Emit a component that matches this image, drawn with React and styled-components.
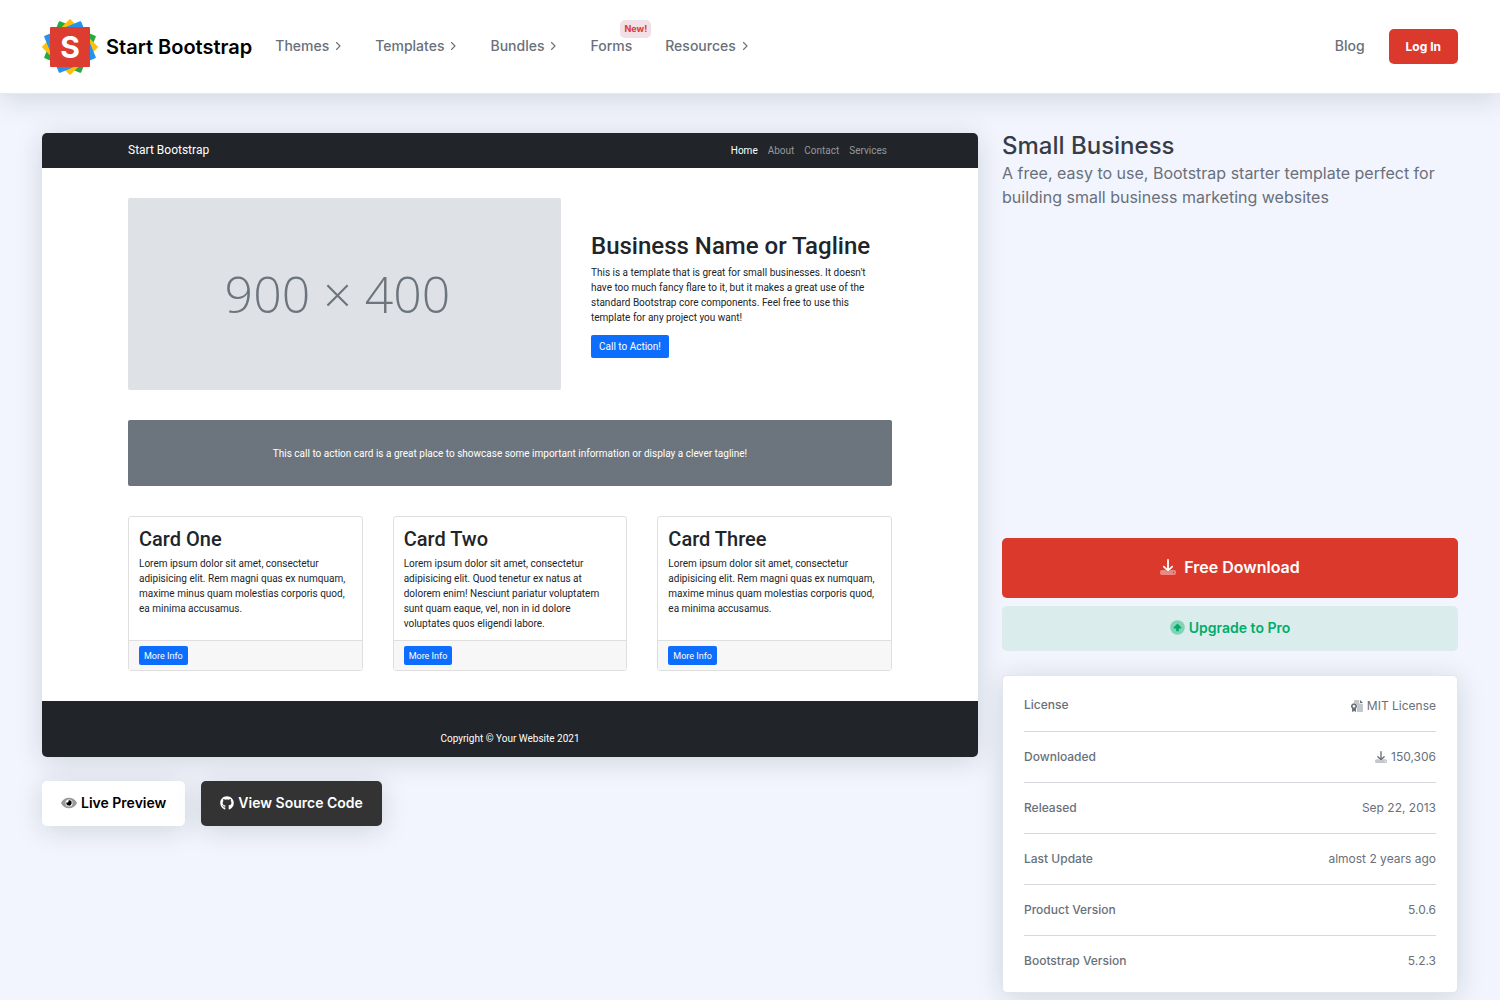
import React from "react";
import styled, { createGlobalStyle, css } from "styled-components";
import { FaGithub } from "react-icons/fa";

const GlobalStyle = createGlobalStyle`
  *, *::before, *::after { box-sizing: border-box; }
  body {
    margin: 0;
    background: #f2f5fe;
    color: #69707a;
    font-family: Inter, "Liberation Sans", sans-serif;
    font-size: 16px;
    line-height: 24px;
  }
  h1, h2, h3, p { margin: 0; }
  a { color: inherit; text-decoration: none; }
  button { border: 0; font-family: inherit; cursor: pointer; }
`;

const shadow = "0 4px 28px rgba(10, 25, 10, 0.15)";

/* ---------- Site header ---------- */

const Header = styled.header`
  position: relative;
  display: flex;
  align-items: center;
  height: 94px;
  padding: 0 42px;
  background: #fff;
  border-bottom: 1px solid #e6eaef;
  box-shadow: ${shadow};
`;

const Brand = styled.a`
  display: flex;
  align-items: center;
  gap: 8px;
  margin-right: 23px;
  color: #000;
  font-size: 20px;
  font-weight: 600;
  white-space: nowrap;
`;

const Nav = styled.nav`
  display: flex;
  flex: 1;
  align-items: center;
  gap: 33px;
`;

const NavLink = styled.a`
  position: relative;
  display: flex;
  align-items: center;
  gap: 6px;
  padding-bottom: 2px;
  font-size: 14px;
  font-weight: 500;
`;

const NewBadge = styled.span`
  position: absolute;
  left: 30px;
  bottom: 22px;
  padding: 0 4px;
  border-radius: 5px;
  background: #f1e0e6;
  color: #dd3a2d;
  font-size: 9px;
  font-weight: 700;
  line-height: 18px;
`;

const Account = styled.div`
  display: flex;
  align-items: center;
  gap: 24px;
`;

const LoginButton = styled.button`
  height: 35px;
  padding: 0 17px;
  border-radius: 5px;
  background: #dc392d;
  color: #fff;
  font-size: 12px;
  font-weight: 700;
`;

/* ---------- Page layout ---------- */

const Page = styled.main`
  display: flex;
  align-items: flex-start;
  padding: 39px 30px 8px;
`;

const PreviewColumn = styled.section`
  flex: 0 0 auto;
  width: calc(100% * 2 / 3);
  padding: 0 12px;
`;

const InfoColumn = styled.section`
  flex: 1;
  min-width: 0;
  padding: 0 12px;
`;

const Title = styled.h1`
  margin-bottom: 2px;
  color: #363d47;
  font-size: 24px;
  font-weight: 500;
  line-height: 26px;
`;

const Intro = styled.header`
  min-height: 405px;
`;

const actionSizes = {
  large: css`height: 60px; font-size: 16px; gap: 8px;`,
  normal: css`height: 45px; font-size: 14px; gap: 4px;`,
};

const actionTones = {
  red: css`background: #dc392d; color: #fff;`,
  green: css`background: #daedec; color: #00ac69;`,
  white: css`background: #fff; color: #000; box-shadow: ${shadow};`,
  dark: css`background: #333; color: #fff; box-shadow: ${shadow};`,
};

const Action = styled.button`
  display: flex;
  align-items: center;
  justify-content: center;
  padding: 0 19px 2px;
  border-radius: 5px;
  font-weight: 600;
  ${(p) => actionSizes[p.$size || "normal"]}
  ${(p) => actionTones[p.$tone]}
`;

const ActionRow = styled.div`
  display: flex;
  gap: 16px;
  margin-top: 24px;
`;

const ActionStack = styled.div`
  display: flex;
  flex-direction: column;
  gap: 8px;
`;

const DetailsCard = styled.div`
  margin-top: 24px;
  padding: 4px 21px 6px;
  border: 1px solid #e3e6ec;
  border-radius: 5px;
  background: #fff;
  box-shadow: ${shadow};
`;

const DetailsTable = styled.table`
  width: 100%;
  border-collapse: collapse;
  font-size: 12px;

  th, td { height: 51px; padding: 0; }
  th { text-align: left; font-weight: 500; }
  td { text-align: right; }
  tr + tr { border-top: 1px solid #d5d9de; }
`;

const DetailValue = styled.span`
  display: inline-flex;
  align-items: center;
  gap: 4px;
  vertical-align: middle;
`;

/* ---------- Template preview ---------- */

const Preview = styled.article`
  overflow: hidden;
  border-radius: 5px;
  background: #fff;
  box-shadow: ${shadow};
  color: #212529;
  font-family: Roboto, "Liberation Sans", sans-serif;
  font-size: 10px;
  line-height: 15px;
`;

const PreviewNav = styled.div`
  display: flex;
  align-items: center;
  justify-content: space-between;
  height: 35px;
  padding: 0 86px;
  background: #212529;
  color: #fff;
  font-size: 12px;
`;

const PreviewLinks = styled.nav`
  display: flex;
  gap: 10px;
  padding-right: 5px;
  font-size: 10px;
`;

const PreviewLink = styled.a`
  color: ${(p) => (p.$active ? "#fff" : "#95989b")};
`;

const PreviewBody = styled.div`
  display: flex;
  flex-direction: column;
  gap: 30px;
  padding: 30px 86px;
`;

const Hero = styled.div`
  display: grid;
  grid-template-columns: 433fr 301fr;
  gap: 30px;
  align-items: center;
`;

const Placeholder = styled.div`
  display: flex;
  align-items: center;
  justify-content: center;
  height: 192px;
  padding-right: 14px;
  border-radius: 2px;
  background: #dee2e6;
  color: #6c757d;
  font-family: "Open Sans", "Noto Sans", sans-serif;
  font-size: 50px;
  font-weight: 300;
`;

const HeroText = styled.div`
  display: flex;
  flex-direction: column;
  align-items: flex-start;
`;

const HeroTitle = styled.h2`
  margin-bottom: 3px;
  font-size: 24px;
  font-weight: 500;
  line-height: 32px;
  white-space: nowrap;
`;

const HeroCopy = styled.p`
  max-width: 284px;
  margin-bottom: 10px;
`;

const BlueButton = styled.button`
  display: block;
  height: ${(p) => (p.$small ? "19px" : "23px")};
  padding: 0 ${(p) => (p.$small ? "5px" : "8px")};
  border-radius: 2px;
  background: #0d6efd;
  color: #fff;
  font-size: ${(p) => (p.$small ? "9px" : "10px")};
`;

const Banner = styled.p`
  padding: 26px 0 25px;
  border-radius: 2px;
  background: #6c757d;
  color: #fff;
  text-align: center;
`;

const Cards = styled.div`
  display: grid;
  grid-template-columns: repeat(3, 1fr);
  gap: 30px;
`;

const Card = styled.section`
  display: flex;
  flex-direction: column;
  border: 1px solid #dfdfdf;
  border-radius: 3px;
`;

const CardBody = styled.div`
  flex: 1;
  padding: 10px 10px 9px;
`;

const CardTitle = styled.h3`
  margin-bottom: 5px;
  font-size: 20px;
  font-weight: 500;
  line-height: 24px;
`;

const CardFooter = styled.div`
  padding: 5px 10px;
  border-top: 1px solid #dfdfdf;
  background: #f7f7f7;
`;

const PreviewFooter = styled.footer`
  padding: 30px 0 11px;
  background: #212529;
  color: #fff;
  text-align: center;
`;

/* ---------- Drawings ---------- */

const Logo = () => (
  <svg width="56" height="56" viewBox="-28 -28 56 56" aria-hidden="true">
    <rect x="-20" y="-20" width="40" height="40" rx="1" fill="#28a745" transform="rotate(22.5)" />
    <rect x="-20" y="-20" width="40" height="40" rx="1" fill="#ffc107" transform="rotate(45)" />
    <rect x="-20" y="-20" width="40" height="40" rx="1" fill="#2492f0" transform="rotate(-22.5)" />
    <rect x="-20" y="-20" width="40" height="40" rx="1" fill="#dd3d31" />
    <text x="0" y="11" textAnchor="middle" fill="#fff" fontFamily="Inter, sans-serif" fontWeight="700" fontSize="30">S</text>
  </svg>
);

const Chevron = () => (
  <svg width="7" height="10" viewBox="0 0 7 10" fill="none" stroke="currentColor" strokeWidth="1.1" aria-hidden="true">
    <path d="M1.5 1.5 5 5 1.5 8.5" strokeLinecap="round" strokeLinejoin="round" />
  </svg>
);

const EyeIcon = () => (
  <svg width="16" height="14" viewBox="0 0 576 512" fill="currentColor" aria-hidden="true">
    <path opacity=".4" fillRule="evenodd" d="M572.5 241.4C518.3 135.600 410.900 64 288 64S57.700 135.600 3.500 241.400a32.400 32.400 0 0 0 0 29.200C57.700 376.400 165.100 448 288 448s230.300-71.600 284.500-177.400a32.400 32.400 0 0 0 0-29.200ZM288 384a128 128 0 1 1 0-256 128 128 0 0 1 0 256Z" />
    <path d="M288 160a96 96 0 0 0-25 4 48 48 0 0 1-67 67 96 96 0 1 0 92-71Z" />
  </svg>
);

const DownloadIcon = ({ size }) => (
  <svg width={size} height={size} viewBox="0 0 16 16" fill="none" aria-hidden="true">
    <path opacity=".4" fill="currentColor" fillRule="evenodd" d="M2 11h3.300l1.300 1.300a2 2 0 0 0 2.800 0L10.700 11H14a2 2 0 0 1 2 2v1a2 2 0 0 1-2 2H2a2 2 0 0 1-2-2v-1a2 2 0 0 1 2-2Zm11.500 1.800a.7.7 0 1 0 0 1.400.7.7 0 0 0 0-1.400Z" />
    <path d="M8 1v10.500M3.800 7.600 8 11.700l4.200-4.100" stroke="currentColor" strokeWidth="1.800" strokeLinecap="round" strokeLinejoin="round" />
  </svg>
);

const UpgradeIcon = () => (
  <svg width="15" height="15" viewBox="0 0 16 16" fill="currentColor" aria-hidden="true">
    <circle opacity=".4" cx="8" cy="8" r="7.800" />
    <path d="M8 3.700 12 7.800a.7.7 0 0 1-.5 1.200H9.400v2.400a.7.7 0 0 1-.7.7H7.300a.7.7 0 0 1-.7-.7V9H4.500A.7.7 0 0 1 4 7.800Z" />
  </svg>
);

const LicenseIcon = () => (
  <svg width="12" height="12" viewBox="0 0 16 16" fill="currentColor" aria-hidden="true">
    <path opacity=".4" d="M5 0h6v4a1 1 0 0 0 1 1h4v10a1 1 0 0 1-1 1H8v-5.200A4.600 4.600 0 0 0 4 4V1a1 1 0 0 1 1-1Z" />
    <path d="M12 0v4h4Z" />
    <path fillRule="evenodd" d="M4 4.200a4 4 0 0 1 2.600 7V16L4 14.700 1.400 16v-4.800A4 4 0 0 1 4 4.200Zm0 2.300a1.800 1.800 0 1 0 0 3.600 1.800 1.800 0 0 0 0-3.600Z" />
  </svg>
);

/* ---------- Content ---------- */

const navItems = [
  { label: "Themes", menu: true },
  { label: "Templates", menu: true },
  { label: "Bundles", menu: true },
  { label: "Forms", badge: "New!" },
  { label: "Resources", menu: true },
];

const shortCopy =
  "Lorem ipsum dolor sit amet, consectetur adipisicing elit. Rem magni quas ex numquam, maxime minus quam molestias corporis quod, ea minima accusamus.";

const cards = [
  { title: "Card One", copy: shortCopy },
  {
    title: "Card Two",
    copy: "Lorem ipsum dolor sit amet, consectetur adipisicing elit. Quod tenetur ex natus at dolorem enim! Nesciunt pariatur voluptatem sunt quam eaque, vel, non in id dolore voluptates quos eligendi labore.",
  },
  { title: "Card Three", copy: shortCopy },
];

const details = [
  { label: "License", value: "MIT License", icon: <LicenseIcon /> },
  { label: "Downloaded", value: "150,306", icon: <DownloadIcon size={12} /> },
  { label: "Released", value: "Sep 22, 2013" },
  { label: "Last Update", value: "almost 2 years ago" },
  { label: "Product Version", value: "5.0.6" },
  { label: "Bootstrap Version", value: "5.2.3" },
];

const TemplatePreview = () => (
  <Preview>
    <PreviewNav>
      <a href="#preview">Start Bootstrap</a>
      <PreviewLinks>
        <PreviewLink href="#home" $active>Home</PreviewLink>
        <PreviewLink href="#about">About</PreviewLink>
        <PreviewLink href="#contact">Contact</PreviewLink>
        <PreviewLink href="#services">Services</PreviewLink>
      </PreviewLinks>
    </PreviewNav>
    <PreviewBody>
      <Hero>
        <Placeholder>900 × 400</Placeholder>
        <HeroText>
          <HeroTitle>Business Name or Tagline</HeroTitle>
          <HeroCopy>
            This is a template that is great for small businesses. It doesn't have too much fancy
            flare to it, but it makes a great use of the standard Bootstrap core components. Feel
            free to use this template for any project you want!
          </HeroCopy>
          <BlueButton>Call to Action!</BlueButton>
        </HeroText>
      </Hero>
      <Banner>
        This call to action card is a great place to showcase some important information or display
        a clever tagline!
      </Banner>
      <Cards>
        {cards.map((card) => (
          <Card key={card.title}>
            <CardBody>
              <CardTitle>{card.title}</CardTitle>
              <p>{card.copy}</p>
            </CardBody>
            <CardFooter>
              <BlueButton $small>More Info</BlueButton>
            </CardFooter>
          </Card>
        ))}
      </Cards>
    </PreviewBody>
    <PreviewFooter>Copyright © Your Website 2021</PreviewFooter>
  </Preview>
);

export default function App() {
  return (
    <>
      <GlobalStyle />
      <Header>
        <Brand href="#top">
          <Logo />
          Start Bootstrap
        </Brand>
        <Nav>
          {navItems.map((item) => (
            <NavLink key={item.label} href={`#${item.label.toLowerCase()}`}>
              {item.label}
              {item.menu && <Chevron />}
              {item.badge && <NewBadge>{item.badge}</NewBadge>}
            </NavLink>
          ))}
        </Nav>
        <Account>
          <NavLink href="#blog">Blog</NavLink>
          <LoginButton>Log In</LoginButton>
        </Account>
      </Header>
      <Page>
        <PreviewColumn>
          <TemplatePreview />
          <ActionRow>
            <Action $tone="white"><EyeIcon />Live Preview</Action>
            <Action $tone="dark"><FaGithub size={14} />View Source Code</Action>
          </ActionRow>
        </PreviewColumn>
        <InfoColumn>
          <Intro>
            <Title>Small Business</Title>
            <p>A free, easy to use, Bootstrap starter template perfect for building small business marketing websites</p>
          </Intro>
          <ActionStack>
            <Action $tone="red" $size="large"><DownloadIcon size={16} />Free Download</Action>
            <Action $tone="green"><UpgradeIcon />Upgrade to Pro</Action>
          </ActionStack>
          <DetailsCard>
            <DetailsTable>
              <tbody>
                {details.map((row) => (
                  <tr key={row.label}>
                    <th scope="row">{row.label}</th>
                    <td><DetailValue>{row.icon}{row.value}</DetailValue></td>
                  </tr>
                ))}
              </tbody>
            </DetailsTable>
          </DetailsCard>
        </InfoColumn>
      </Page>
    </>
  );
}
